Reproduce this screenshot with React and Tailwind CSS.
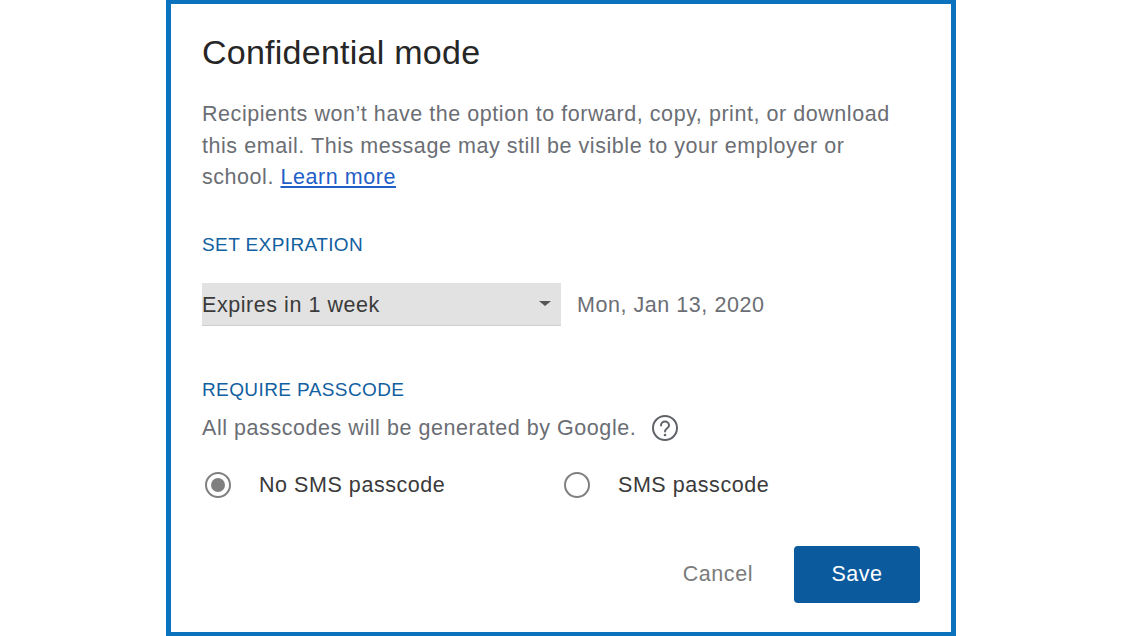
import React from 'react';

const sans = { fontFamily: '"Liberation Sans", Arial, sans-serif' };

const Radio = ({ checked }) => (
    <span className="flex h-[26px] w-[26px] shrink-0 items-center justify-center rounded-full border-2 border-[#808080]">
        {checked && <span className="h-[14px] w-[14px] rounded-full bg-[#808080]" />}
    </span>
);

const App = () => {
    return (
        <div style={sans} className="flex h-[636px] w-[1130px] justify-center overflow-hidden bg-white">
            <div className="ml-[-8px] h-[636px] w-[790px] shrink-0 border-x-[5px] border-y-[4px] border-[#0b72bd] bg-white pl-[31px] pr-[31px] pt-[28px]">
                <h1 className="text-[34px] leading-[40px] tracking-[0.25px] text-[#262626]">Confidential mode</h1>

                <p className="mt-[27px] text-[21.5px] leading-[31.5px] tracking-[0.55px] text-[#6b6e74]">
                    Recipients won’t have the option to forward, copy, print, or download<br />
                    this email. This message may still be visible to your employer or<br />
                    school. <a href="#" className="text-[#1f5fc8] underline">Learn more</a>
                </p>

                <h2 className="mt-[39px] text-[19px] leading-[24px] tracking-[0.4px] text-[#11609f]">SET EXPIRATION</h2>

                <div className="mt-[26px] flex items-center">
                    <div className="flex h-[43px] w-[359px] items-center justify-between border-b border-[#cfcfcf] bg-[#e2e2e2] pr-[10px]">
                        <span className="pt-[3px] text-[21.5px] tracking-[0.55px] text-[#3a3a3a]">Expires in 1 week</span>
                        <span className="h-0 w-0 border-x-[6px] border-t-[5px] border-x-transparent border-t-[#555555]" />
                    </div>
                    <span className="ml-[16px] pt-[3px] text-[21.5px] tracking-[0.55px] text-[#6b6e74]">Mon, Jan 13, 2020</span>
                </div>

                <h2 className="mt-[52px] text-[19px] leading-[24px] tracking-[0.4px] text-[#11609f]">REQUIRE PASSCODE</h2>

                <div className="mt-[11px] flex h-[31px] items-center">
                    <span className="text-[21.5px] tracking-[0.55px] text-[#6b6e74]">All passcodes will be generated by Google.</span>
                    <svg className="ml-[15px]" width="28" height="28" viewBox="0 0 28 28" fill="none">
                        <circle cx="14" cy="14" r="12" stroke="#5f6368" strokeWidth="2" />
                        <path d="M10 11.5a4 4 0 0 1 8 0c0 2.6-4 3-4 6" stroke="#5f6368" strokeWidth="2" strokeLinecap="round" />
                        <circle cx="14" cy="21" r="1.3" fill="#5f6368" />
                    </svg>
                </div>

                <div className="mt-[25px] flex items-center">
                    <div className="ml-[3px] flex w-[359px] items-center gap-[28px]">
                        <Radio checked />
                        <span className="text-[21.5px] tracking-[0.55px] text-[#3a3a3a]">No SMS passcode</span>
                    </div>
                    <div className="flex items-center gap-[28px]">
                        <Radio />
                        <span className="text-[21.5px] tracking-[0.55px] text-[#3a3a3a]">SMS passcode</span>
                    </div>
                </div>

                <div className="mt-[45px] flex items-center justify-end">
                    <button className="mr-[41px] text-[21.5px] tracking-[0.55px] text-[#7b7b7b]">Cancel</button>
                    <button className="h-[57px] w-[126px] rounded-[4px] bg-[#0b5a9e] text-[21.5px] tracking-[0.55px] text-white">Save</button>
                </div>
            </div>
        </div>
    );
};

export default App;
